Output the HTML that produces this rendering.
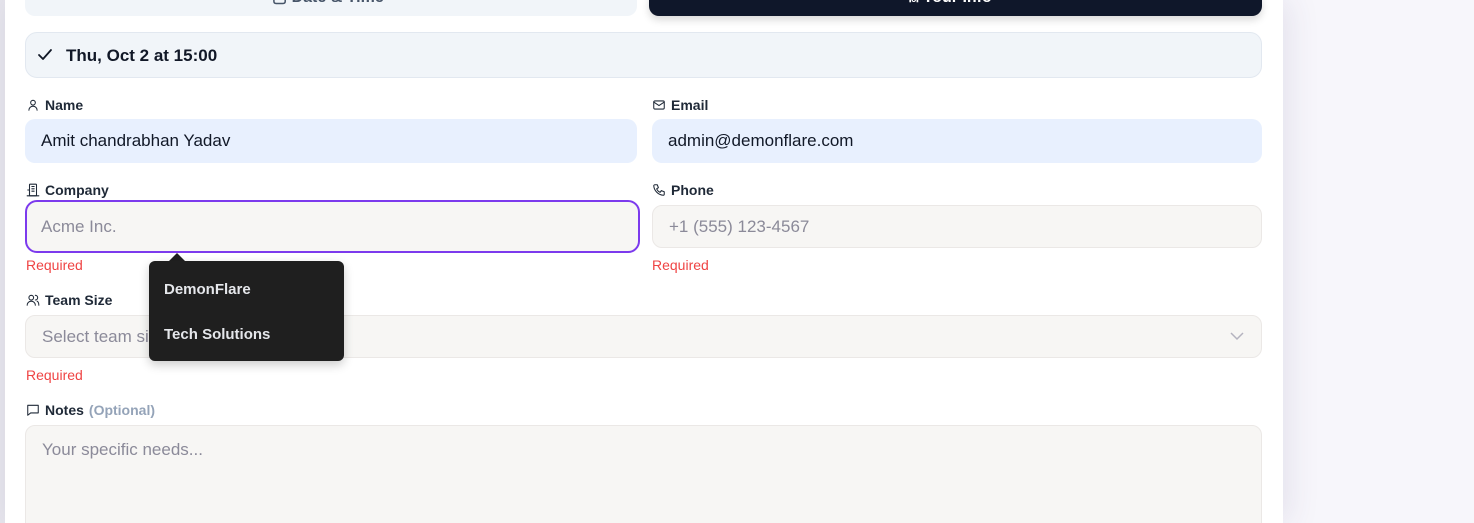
<!DOCTYPE html>
<html><head><meta charset="utf-8"><style>
*{box-sizing:border-box;margin:0;padding:0}
html,body{width:1474px;height:523px;overflow:hidden}
body{background:#f7f6fb;font-family:"Liberation Sans",sans-serif;position:relative;color:#111827}
.edge{position:absolute;left:0;top:0;width:5px;height:523px;background:#e6e5ec}
.panel{position:absolute;left:5px;top:0;width:1278px;height:523px;background:#fff;box-shadow:6px 0 30px rgba(60,50,110,0.10)}
.a{position:absolute}
.box{position:absolute;border-radius:10px}
.lbl{position:absolute;font-size:14px;font-weight:bold;color:#1f2937;display:flex;align-items:center;gap:5px;height:16px}
.lbl svg{width:14px;height:14px;fill:none;stroke:#1f2937;stroke-width:1.8;stroke-linecap:round;stroke-linejoin:round}
.inp{position:absolute;border-radius:10px;font-size:17px;display:flex;align-items:center;padding-left:16px}
.fill{background:#e8f0fe;color:#111827}
.emp{background:#f7f6f4;border:1px solid #ebe8e6;color:#8b8a99}
.req{position:absolute;font-size:14px;color:#ef4444}
</style></head><body>
<div class="edge"></div>
<div class="panel"></div>
<div class="box" style="left:25px;top:-10px;width:612px;height:26px;background:#f1f5f9;overflow:hidden"><div class="a" style="left:247px;top:0;font-size:16px;font-weight:bold;color:#475569;line-height:1">▢ Date &amp; Time</div></div>
<div class="box" style="left:649px;top:-10px;width:613px;height:26px;background:#0f172a;box-shadow:0 4px 8px rgba(0,0,0,0.15);overflow:hidden"><div class="a" style="left:260px;top:0;font-size:16px;font-weight:bold;color:#fff;line-height:1">⍝ Your Info</div></div>
<div class="box" style="left:25px;top:32px;width:1237px;height:46px;background:#f1f5f9;border:1px solid #e2e8f0;border-radius:12px"></div>
<svg class="a" style="left:37px;top:48px" width="16" height="14" viewBox="0 0 16 14"><path d="M2 7l4 4 8-9" fill="none" stroke="#111827" stroke-width="1.8" stroke-linecap="round" stroke-linejoin="round"/></svg>
<div class="a" style="left:66px;top:46px;font-size:17px;font-weight:bold;color:#111827">Thu, Oct 2 at 15:00</div>

<div class="lbl" style="left:26px;top:97px"><svg viewBox="0 0 24 24"><circle cx="12" cy="8" r="4"/><path d="M5 21c0-4 3-7 7-7s7 3 7 7"/></svg>Name</div>
<div class="inp fill" style="left:25px;top:119px;width:612px;height:44px">Amit chandrabhan Yadav</div>
<div class="lbl" style="left:652px;top:97px"><svg viewBox="0 0 24 24"><rect x="3" y="5" width="18" height="14" rx="2"/><path d="M3 7l9 6 9-6"/></svg>Email</div>
<div class="inp fill" style="left:652px;top:119px;width:610px;height:44px">admin@demonflare.com</div>

<div class="lbl" style="left:26px;top:182px"><svg viewBox="0 0 24 24"><rect x="6" y="2" width="12" height="20" rx="1"/><path d="M2 22h20M10 6h4M10 10h4M10 14h4M3 12h3v10"/></svg>Company</div>
<div class="inp emp" style="left:25px;top:200px;width:615px;height:53px;border:2px solid #7c3aed;border-radius:12px;padding-left:14px">Acme Inc.</div>
<div class="lbl" style="left:652px;top:182px"><svg viewBox="0 0 24 24"><path d="M5 3h4l2 5-3 2a11 11 0 006 6l2-3 5 2v4a2 2 0 01-2 2A18 18 0 013 5a2 2 0 012-2z"/></svg>Phone</div>
<div class="inp emp" style="left:652px;top:205px;width:610px;height:43px">+1 (555) 123-4567</div>
<div class="req" style="left:26px;top:257px">Required</div>
<div class="req" style="left:652px;top:257px">Required</div>

<div class="lbl" style="left:26px;top:292px"><svg viewBox="0 0 24 24"><circle cx="9" cy="8" r="4"/><path d="M2 21c0-4 3-7 7-7s7 3 7 7M16 4a4 4 0 010 8M19 14c2 1 3 4 3 7"/></svg>Team Size</div>
<div class="inp emp" style="left:25px;top:315px;width:1237px;height:43px">Select team size</div>
<svg class="a" style="left:1230px;top:331px" width="14" height="10" viewBox="0 0 14 10"><path d="M1 2l6 6 6-6" fill="none" stroke="#b4b3bf" stroke-width="1.5"/></svg>
<div class="req" style="left:26px;top:367px">Required</div>

<div class="lbl" style="left:26px;top:402px"><svg viewBox="0 0 24 24"><path d="M3 4h18v13H8l-5 4z"/></svg>Notes <span style="color:#94a3b8">(Optional)</span></div>
<div class="inp emp" style="left:25px;top:425px;width:1237px;height:110px;align-items:flex-start;padding-top:14px">Your specific needs...</div>

<div class="a" style="left:168px;top:253px;width:0;height:0;border-left:9px solid transparent;border-right:9px solid transparent;border-bottom:9px solid #1f1f1f"></div>
<div class="box" style="left:149px;top:261px;width:195px;height:100px;background:#1f1f1f;border-radius:6px;box-shadow:0 4px 10px rgba(0,0,0,0.2)"></div>
<div class="a" style="left:164px;top:281px;font-size:15px;font-weight:bold;color:#e5e7eb">DemonFlare</div>
<div class="a" style="left:164px;top:326px;font-size:15px;font-weight:bold;color:#e5e7eb">Tech Solutions</div>
</body></html>
